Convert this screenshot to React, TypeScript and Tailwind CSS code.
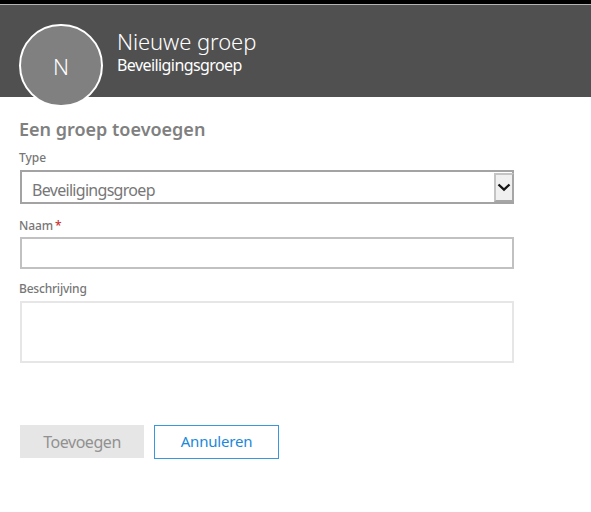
import React from "react";

function Header() {
  return (
    <header className="h-[97px] border-t-4 border-black bg-[#505050] text-white">
      <div className="flex h-[93px] items-start border-t border-[#b4b4b4] pl-[19px]">
        <div className="mt-[19px] flex h-[83px] w-[84px] shrink-0 items-center justify-center rounded-full border-2 border-white bg-[#808080] pt-[1px] text-[22px] font-[350]">
          N
        </div>
        <div className="ml-[14px] mt-[22px] whitespace-nowrap">
          <h1 className="text-[22px] font-[350] leading-[28px] tracking-[-0.08px]">Nieuwe groep</h1>
          <p className="text-[16px] leading-[20px] tracking-[-0.58px]">Beveiligingsgroep</p>
        </div>
      </div>
    </header>
  );
}

export default function App() {
  return (
    <div className="h-[512px] w-[591px] overflow-hidden bg-white font-['Noto_Sans','Open_Sans',sans-serif] text-[#777777]">
      <Header />
      <main className="flex w-[514px] flex-col pl-5">
        <h2 className="-ml-px mt-[20px] h-6 whitespace-nowrap text-[18px] font-semibold leading-6 text-[#808080]">Een groep toevoegen</h2>
        <label className="-ml-px mt-[9px] h-4 text-[12px] font-medium leading-4">Type</label>
        <div className="mt-[4px] flex h-[34px] justify-between border-2 border-[#a3a3a3] pl-[10px]">
          <span className="mt-[8px] text-[16px] leading-5 tracking-[-0.7px]">Beveiligingsgroep</span>
          <div className="-mr-[2px] mt-px flex h-[29px] w-5 items-center justify-center border-2 border-[#a6a6a6] border-l-[#c4c4c4] border-t-[#c4c4c4] bg-[#f0f0f0]">
            <svg width="14" height="10" viewBox="0 0 14 10" className="shrink-0" fill="none" stroke="#151515" strokeWidth="2.3">
              <path d="M1.5 1.5 7 6.7 12.5 1.5" />
            </svg>
          </div>
        </div>
        <label className="-ml-px mt-[14px] h-4 text-[12px] font-medium leading-4 tracking-[-0.1px]">
          Naam<span className="ml-[2px] text-[#c93030]">*</span>
        </label>
        <div className="mt-[3px] h-8 border-2 border-[#c1c1c1]" />
        <label className="-ml-px mt-[12px] h-4 text-[12px] font-medium leading-4 tracking-[-0.2px]">Beschrijving</label>
        <div className="mt-[4px] h-[62px] border-2 border-[#e6e6e6]" />
        <div className="mt-[62px] flex gap-[10px] text-[16px] tracking-[-0.45px]">
          <button className="h-[33px] w-[124px] bg-[#e6e6e6] text-[#919191]">Toevoegen</button>
          <button className="h-[34px] w-[125px] border border-[#3a97dc] pb-[2px] text-[15px] tracking-[-0.2px] text-[#2088d8]">Annuleren</button>
        </div>
      </main>
    </div>
  );
}
